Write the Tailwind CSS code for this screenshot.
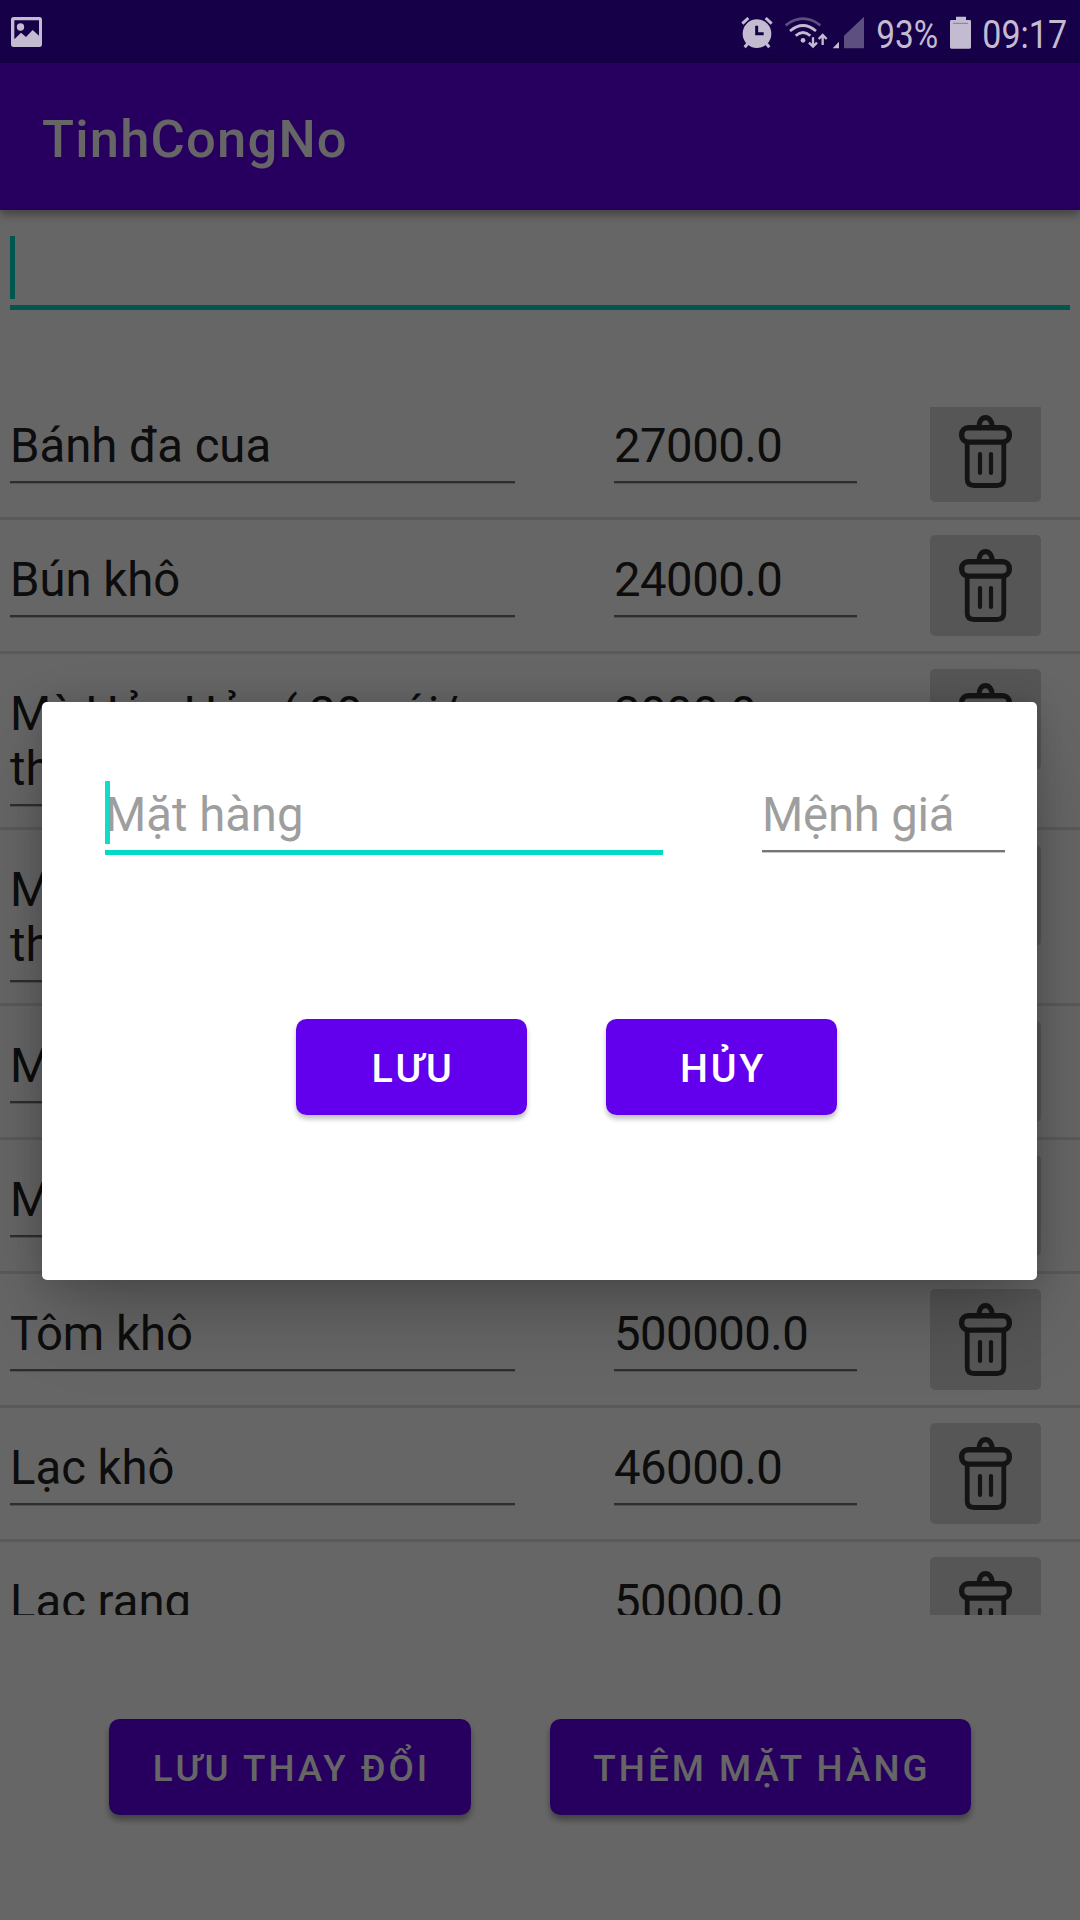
<!DOCTYPE html>
<html lang="vi">
<head>
<meta charset="utf-8">
<title>TinhCongNo</title>
<script src="https://cdn.jsdelivr.net/npm/@tailwindcss/browser@4"></script>
</head>
<body class="bg-white">
<div class="relative w-[1080px] h-[1920px] overflow-hidden bg-white font-[Roboto,sans-serif] flex flex-col">

  <!-- App bar -->
  <div class="h-[63px] shrink-0 bg-[#3700b3]"></div>
  <header class="h-[147px] shrink-0 bg-[#6200ee] flex items-center px-[42px] shadow-[0_4px_10px_rgba(0,0,0,0.4)]">
    <h1 class="text-white text-[52.5px] leading-[62px] font-medium pt-[4px] tracking-[1.2px]">TinhCongNo</h1>
  </header>

  <!-- Search field -->
  <div class="mx-[10px] mt-[26px] h-[74px] shrink-0 flex flex-col justify-between">
    <div class="w-[5px] h-[63px] bg-[#03dac5]"></div>
    <div class="h-[5px] bg-[#03dac5]"></div>
  </div>

  <!-- Item list, scrolled slightly -->
  <div class="mt-[97px] h-[1208px] shrink-0 overflow-hidden">
    <div id="list" class="-mt-[21px] flex flex-col"></div>
  </div>

  <!-- Actions -->
  <div class="mt-[104px] h-[96px] shrink-0 flex pl-[109px] gap-[79px] text-white text-[36.75px] font-medium tracking-[0.083em]">
    <button class="w-[362px] pt-[4px] pl-[3px] whitespace-nowrap rounded-[10.5px] bg-[#6200ee] shadow-[0_5px_6px_rgba(0,0,0,0.35)]">LƯU THAY ĐỔI</button>
    <button class="w-[421px] pt-[4px] pl-[3px] whitespace-nowrap rounded-[10.5px] bg-[#6200ee] shadow-[0_5px_6px_rgba(0,0,0,0.35)]">THÊM MẶT HÀNG</button>
  </div>

  <!-- Scrim and dialog -->
  <div class="absolute inset-0 bg-black/60 pt-[702px] pl-[42px]">
    <section class="w-[995px] h-[578px] rounded-[5px] bg-white flex flex-col pt-[79px] shadow-[0_36px_76px_-8px_rgba(0,0,0,0.26),0_0_28px_rgba(0,0,0,0.14)]">
      <div class="flex pl-[63px] gap-[99px] items-start text-[47.25px] leading-[55px] text-[#9e9e9e]">
        <div class="w-[558px] flex flex-col">
          <div class="relative h-[69px] pt-[7px]">Mặt hàng
            <div class="absolute left-0 top-0 w-[5px] h-[63px] bg-[#03dac5]/95"></div>
          </div>
          <div class="h-[5px] bg-[#03dac5]"></div>
        </div>
        <div class="w-[243px] flex flex-col">
          <div class="h-[69px] pt-[7px] tracking-[-0.2px]">Mệnh giá</div>
          <div class="h-[2px] bg-[#757575] shadow-[0_1px_0_#c8c8c8]"></div>
        </div>
      </div>
      <div class="mt-[164px] h-[96px] flex pl-[254px] gap-[79px] text-white text-[39.4px] font-medium tracking-[0.07em]">
        <button class="w-[231px] pt-[3px] pl-[3px] rounded-[10.5px] bg-[#6200ee] shadow-[0_4px_5px_rgba(0,0,0,0.25)]">LƯU</button>
        <button class="w-[231px] pt-[3px] pl-[3px] rounded-[10.5px] bg-[#6200ee] shadow-[0_4px_5px_rgba(0,0,0,0.25)]">HỦY</button>
      </div>
    </section>
  </div>

  <!-- System status bar -->
  <div class="absolute inset-x-0 top-0 h-[63px] flex justify-between">
    <svg class="w-[60px] h-[63px]" viewBox="0 0 180 189">
      <path fill="#c3bcd0" fill-rule="evenodd" d="M41 51H118Q126 51 126 59V133Q126 141 118 141H41Q33 141 33 133V59Q33 51 41 51ZM43 61V118L63 98L78 111L98 90L117 107V61Z"/>
      <circle cx="61.500" cy="81" r="11" fill="#c3bcd0"/>
    </svg>
    <svg class="w-[360px] h-[63px]" viewBox="0 0 1080 189">
      <g fill="none" stroke="#c3bcd0" stroke-width="8">
        <path d="M67 71L85 54M155 71L137 54" stroke-width="9"/>
        <path d="M74 142L84 130M148 142L138 130" stroke-width="9"/>
        <path d="M210 93Q249 60 288 93"/>
        <path d="M227 107Q249 88 271 107"/>
        <path d="M197 76Q249 36 301 76" stroke="#5d4f80"/>
        <path d="M279 112V139M267 128L279 140L291 128M308 135V106M296 117L308 105L320 117" stroke-width="7"/>
      </g>
      <circle cx="111" cy="101" r="43" fill="#c3bcd0"/>
      <path d="M110 77V101H131" fill="none" stroke="#160048" stroke-width="9"/>
      <circle cx="249" cy="121" r="7" fill="#c3bcd0"/>
      <path d="M338 145H357V125Z" fill="#c3bcd0"/>
      <path d="M372 145H432V50L372 107Z" fill="#5d4f80"/>
      <path d="M708 50H738V60H749Q753 60 753 64V142Q753 146 749 146H694Q690 146 690 142V64Q690 60 694 60H708Z" fill="#c3bcd0"/>
      <path d="M699 70H744" stroke="#857aa0" stroke-width="3"/>
      <g fill="#c3bcd0" font-size="116">
        <text x="469" y="144" textLength="186" lengthAdjust="spacingAndGlyphs">93%</text>
        <text x="787" y="144" textLength="254" lengthAdjust="spacingAndGlyphs">09:17</text>
      </g>
    </svg>
  </div>
</div>

<script>
const items = [
  { name: "Bánh đa cua", price: "27000.0" },
  { name: "Bún khô", price: "24000.0" },
  { name: "Mỳ Hảo Hảo ( 30 gói/<br>thùng)", price: "3000.0", tall: true },
  { name: "Mỳ<br>thùng", price: "", tall: true },
  { name: "Mỳ", price: "" },
  { name: "Mỳ", price: "" },
  { name: "Tôm khô", price: "500000.0" },
  { name: "Lạc khô", price: "46000.0" },
  { name: "Lạc rang", price: "50000.0" }
];
const field = (text, width, height) => `
  <div class="${width} flex flex-col">
    <div class="${height} whitespace-nowrap">${text}</div>
    <div class="h-[2px] bg-[#737373] shadow-[0_1px_0_#cccccc]"></div>
  </div>`;
document.getElementById("list").innerHTML = items.map(i => `
  <div class="${i.tall ? "h-[176px]" : "h-[134px]"} shrink-0 flex items-start pl-[10px] border-b-[3px] border-[#e0e0e0] text-[47.25px] leading-[55px] text-[#212121]">
    <div class="flex gap-[99px] pt-[33px]">
      ${field(i.name, "w-[505px]", i.tall ? "h-[117px]" : "h-[62px]")}
      ${field(i.price, "w-[243px] tracking-[-0.5px]", "h-[62px]")}
    </div>
    <div class="ml-[73px] mt-[15px] w-[111px] h-[101px] rounded-[5px] bg-[#d6d7d7]">
      <svg class="w-[111px] h-[101px]" viewBox="0 0 111 101" fill="none" stroke="#323232">
        <path d="M49 26C49 20 52 16.700 55.500 16.700S62.300 20 62.300 26" stroke-width="5.200"/>
        <rect x="31.700" y="26.700" width="47.600" height="14.400" rx="6.500" stroke-width="5.400"/>
        <path d="M37.200 43V78Q37.200 84.500 44 84.500H67Q73.800 84.500 73.800 78V43" stroke-width="4.800"/>
        <path d="M50 53V72M61 53V72" stroke-width="4.200" stroke-linecap="round"/>
      </svg>
    </div>
  </div>`).join("");
</script>
</body>
</html>
